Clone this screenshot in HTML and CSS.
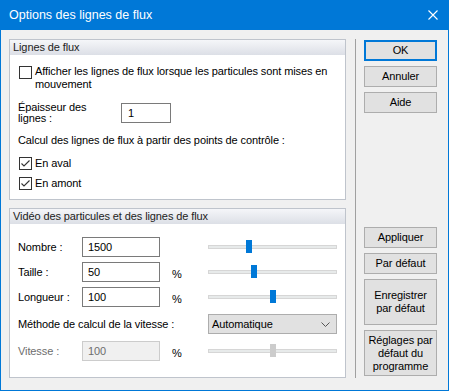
FILE: index.html
```html
<!DOCTYPE html>
<html lang="fr">
<head>
<meta charset="utf-8">
<title>Options des lignes de flux</title>
<link rel="stylesheet" href="styles.css">
</head>
<body>
<div class="window">
  <div class="titlebar">
    <span class="title">Options des lignes de flux</span>
    <svg class="close" width="10" height="10" viewBox="0 0 10 10"><path d="M0.5 0.5 L9.5 9.5 M9.5 0.5 L0.5 9.5" stroke="#fff" stroke-width="1.1" fill="none"/></svg>
  </div>
  <div class="client">
    <div class="left">
      <div class="group g1">
        <div class="ghead">Lignes de flux</div>
        <div class="chkrow first">
          <span class="box"></span>
          <span class="chktext">Afficher les lignes de flux lorsque les particules sont mises en<br>mouvement</span>
        </div>
        <div class="thick">
          <span class="thlabel">Épaisseur des<br>lignes :</span>
          <span class="input w50">1</span>
        </div>
        <div class="calc">Calcul des lignes de flux à partir des points de contrôle :</div>
        <div class="chkrow aval">
          <span class="box"><svg width="11" height="11" viewBox="0 0 11 11"><path d="M1.5 5.5 L4 8 L9.5 2.5" stroke="#333" stroke-width="1.1" fill="none"/></svg></span>
          <span class="chktext">En aval</span>
        </div>
        <div class="chkrow amont">
          <span class="box"><svg width="11" height="11" viewBox="0 0 11 11"><path d="M1.5 5.5 L4 8 L9.5 2.5" stroke="#333" stroke-width="1.1" fill="none"/></svg></span>
          <span class="chktext">En amont</span>
        </div>
      </div>
      <div class="group g2">
        <div class="ghead">Vidéo des particules et des lignes de flux</div>
        <div class="vrow r1">
          <span class="lbl">Nombre :</span>
          <span class="input">1500</span>
          <span class="pct"></span>
          <div class="slider"><span class="thumb" style="left:37px"></span></div>
        </div>
        <div class="vrow r2">
          <span class="lbl">Taille :</span>
          <span class="input">50</span>
          <span class="pct">%</span>
          <div class="slider"><span class="thumb" style="left:42px"></span></div>
        </div>
        <div class="vrow r3">
          <span class="lbl">Longueur :</span>
          <span class="input">100</span>
          <span class="pct">%</span>
          <div class="slider"><span class="thumb" style="left:61px"></span></div>
        </div>
        <div class="vrow r4">
          <span class="lbl wide">Méthode de calcul de la vitesse :</span>
          <div class="combo"><span>Automatique</span><svg width="9" height="5" viewBox="0 0 9 5"><path d="M0.5 0.5 L4.5 4.5 L8.5 0.5" stroke="#555" stroke-width="1" fill="none"/></svg></div>
        </div>
        <div class="vrow r5">
          <span class="lbl dis">Vitesse :</span>
          <span class="input disabled">100</span>
          <span class="pct">%</span>
          <div class="slider"><span class="thumb off" style="left:61px"></span></div>
        </div>
      </div>
    </div>
    <div class="sep"></div>
    <div class="buttons">
      <div class="btn default">OK</div>
      <div class="btn">Annuler</div>
      <div class="btn">Aide</div>
      <div class="lower">
        <div class="btn">Appliquer</div>
        <div class="btn">Par défaut</div>
        <div class="btn tall">Enregistrer<br>par défaut</div>
        <div class="btn tall">Réglages par<br>défaut du<br>programme</div>
      </div>
    </div>
  </div>
</div>
</body>
</html>
```

FILE: styles.css
```css
* { box-sizing: border-box; }
html, body { margin: 0; padding: 0; }
body {
  font-family: "Liberation Sans", Arial, sans-serif;
  font-size: 11px;
  letter-spacing: -0.1px;
  color: #000;
  background: #fff;
}
.window {
  width: 449px;
  height: 391px;
  background: #0078d7;
  display: flex;
  flex-direction: column;
}
.titlebar {
  height: 30px;
  display: flex;
  align-items: center;
  padding-left: 9px;
  padding-right: 11px;
  color: #fff;
  font-size: 12.5px;
  letter-spacing: 0;
}
.title { flex: 1; }
.close { display: block; }
.client {
  flex: 1;
  margin: 0 1px 1px 1px;
  background: #f0f0f0;
  display: flex;
  padding: 9px 11px 12px 8px;
}
.left {
  width: 337px;
  display: flex;
  flex-direction: column;
  gap: 8px;
}
.group {
  background: #fff;
  border: 1px solid #bfc4cc;
}
.g1 { height: 161px; }
.g2 { height: 170px; }
.ghead {
  height: 15px;
  line-height: 14px;
  padding-left: 3px;
  color: #222;
  background: linear-gradient(#f5f6f9, #dcdfe6);
}
.chkrow {
  display: flex;
  align-items: flex-start;
  padding-left: 9px;
  line-height: 13px;
}
.chkrow.first { margin-top: 10px; }
.chkrow.aval { margin-top: 10px; }
.chkrow.amont { margin-top: 7px; }
.box {
  width: 13px;
  height: 13px;
  border: 1px solid #333;
  background: #fff;
  flex: none;
  display: flex;
  align-items: center;
  justify-content: center;
}
.chkrow.first .box { margin-top: 1px; }
.box svg { display: block; }
.chktext { margin-left: 3px; }
.thick {
  display: flex;
  align-items: center;
  margin-top: 10px;
  padding-left: 8px;
  height: 23px;
}
.thlabel {
  width: 103px;
  line-height: 11px;
}
.input {
  height: 20px;
  width: 78px;
  border: 1px solid #7a7a7a;
  background: #fff;
  padding-left: 5px;
  line-height: 18px;
  flex: none;
}
.input.w50 { width: 50px; padding-left: 6px; }
.input.disabled {
  background: #f0f0f0;
  border-color: #cccccc;
  color: #6d6d6d;
}
.calc {
  margin-top: 10px;
  padding-left: 8px;
  line-height: 13px;
}
.vrow {
  display: grid;
  grid-template-columns: 64px 78px 48px 129px;
  align-items: center;
  height: 20px;
  padding-left: 8px;
}
.r1 { margin-top: 13px; }
.r2 { margin-top: 5px; }
.r3 { margin-top: 5px; }
.r4 { margin-top: 7px; }
.r5 { margin-top: 7px; }
.lbl { white-space: nowrap; }
.lbl.wide { grid-column: 1 / 4; }
.lbl.dis { color: #6d6d6d; }
.pct { padding-left: 12px; padding-top: 4px; }
.slider {
  position: relative;
  height: 4px;
  background: #e7eaea;
  border: 1px solid #d6d6d6;
  align-self: center;
}
.thumb {
  position: absolute;
  top: -6px;
  width: 6px;
  height: 13px;
  background: #0078d7;
}
.thumb.off { background: #cccccc; }
.combo {
  height: 20px;
  border: 1px solid #adadad;
  background: #e1e1e1;
  display: flex;
  align-items: center;
  justify-content: space-between;
  padding: 0 6px 0 3px;
}
.combo svg { display: block; }
.sep {
  width: 1px;
  margin-left: 9px;
  background: #a0a0a0;
}
.buttons {
  margin-left: 8px;
  width: 73px;
  display: flex;
  flex-direction: column;
  gap: 5px;
  padding-top: 1px;
}
.btn {
  height: 21px;
  border: 1px solid #adadad;
  background: #e1e1e1;
  display: flex;
  align-items: center;
  justify-content: center;
  text-align: center;
  line-height: 13px;
  flex: none;
}
.btn.default { border: 2px solid #0078d7; }
.btn.tall { height: 46px; }
.lower {
  margin-top: auto;
  margin-bottom: 2px;
  display: flex;
  flex-direction: column;
  gap: 5px;
}
```
